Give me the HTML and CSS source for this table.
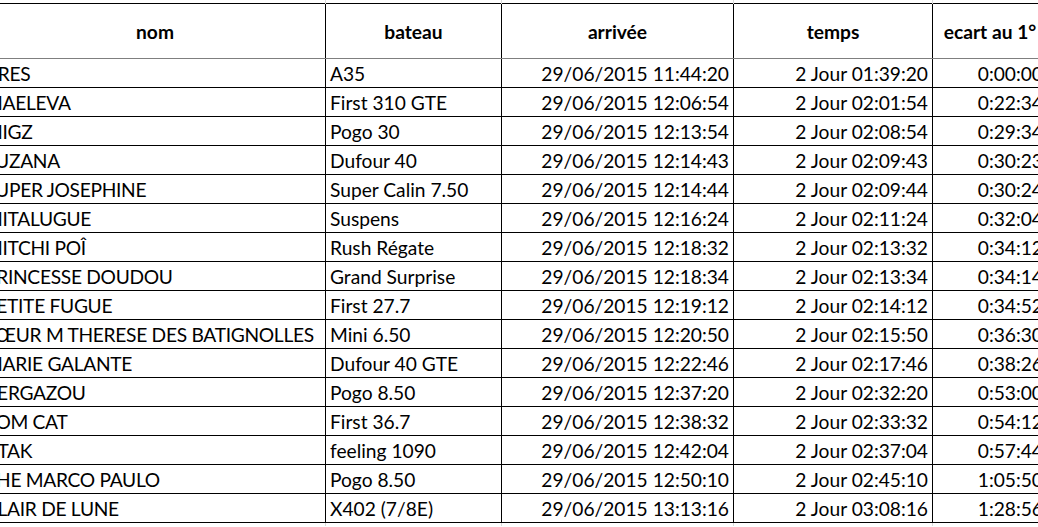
FILE: index.html
```html
<!DOCTYPE html>
<html lang="fr">
<head>
<meta charset="utf-8">
<title>Classement</title>
<link rel="stylesheet" href="styles.css">
</head>
<body>
<div class="viewport">
<table class="sheet">
<colgroup>
<col class="c-nom"><col class="c-bateau"><col class="c-arr"><col class="c-temps"><col class="c-ecart">
</colgroup>
<tbody>
<tr class="grid"><td></td><td></td><td></td><td></td><td></td></tr>
<tr class="head"><th>nom</th><th>bateau</th><th>arrivée</th><th>temps</th><th>ecart au 1°</th></tr>
<tr><td class="name">ARES</td><td>A35</td><td class="num">29/06/2015 11:44:20</td><td class="num">2 Jour 01:39:20</td><td class="num">0:00:00</td></tr>
<tr><td class="name">MAELEVA</td><td>First 310 GTE</td><td class="num">29/06/2015 12:06:54</td><td class="num">2 Jour 02:01:54</td><td class="num">0:22:34</td></tr>
<tr><td class="name">MIGZ</td><td>Pogo 30</td><td class="num">29/06/2015 12:13:54</td><td class="num">2 Jour 02:08:54</td><td class="num">0:29:34</td></tr>
<tr><td class="name">SUZANA</td><td>Dufour 40</td><td class="num">29/06/2015 12:14:43</td><td class="num">2 Jour 02:09:43</td><td class="num">0:30:23</td></tr>
<tr><td class="name">SUPER JOSEPHINE</td><td>Super Calin 7.50</td><td class="num">29/06/2015 12:14:44</td><td class="num">2 Jour 02:09:44</td><td class="num">0:30:24</td></tr>
<tr><td class="name">MITALUGUE</td><td>Suspens</td><td class="num">29/06/2015 12:16:24</td><td class="num">2 Jour 02:11:24</td><td class="num">0:32:04</td></tr>
<tr><td class="name">MITCHI POÎ</td><td>Rush Régate</td><td class="num">29/06/2015 12:18:32</td><td class="num">2 Jour 02:13:32</td><td class="num">0:34:12</td></tr>
<tr><td class="name">PRINCESSE DOUDOU</td><td>Grand Surprise</td><td class="num">29/06/2015 12:18:34</td><td class="num">2 Jour 02:13:34</td><td class="num">0:34:14</td></tr>
<tr><td class="name">PETITE FUGUE</td><td>First 27.7</td><td class="num">29/06/2015 12:19:12</td><td class="num">2 Jour 02:14:12</td><td class="num">0:34:52</td></tr>
<tr><td class="name">SŒUR M THERESE DES BATIGNOLLES</td><td>Mini 6.50</td><td class="num">29/06/2015 12:20:50</td><td class="num">2 Jour 02:15:50</td><td class="num">0:36:30</td></tr>
<tr><td class="name">MARIE GALANTE</td><td>Dufour 40 GTE</td><td class="num">29/06/2015 12:22:46</td><td class="num">2 Jour 02:17:46</td><td class="num">0:38:26</td></tr>
<tr><td class="name">BERGAZOU</td><td>Pogo 8.50</td><td class="num">29/06/2015 12:37:20</td><td class="num">2 Jour 02:32:20</td><td class="num">0:53:00</td></tr>
<tr><td class="name">TOM CAT</td><td>First 36.7</td><td class="num">29/06/2015 12:38:32</td><td class="num">2 Jour 02:33:32</td><td class="num">0:54:12</td></tr>
<tr><td class="name">KTAK</td><td>feeling 1090</td><td class="num">29/06/2015 12:42:04</td><td class="num">2 Jour 02:37:04</td><td class="num">0:57:44</td></tr>
<tr><td class="name">THE MARCO PAULO</td><td>Pogo 8.50</td><td class="num">29/06/2015 12:50:10</td><td class="num">2 Jour 02:45:10</td><td class="num">1:05:50</td></tr>
<tr><td class="name">CLAIR DE LUNE</td><td>X402 (7/8E)</td><td class="num">29/06/2015 13:13:16</td><td class="num">2 Jour 03:08:16</td><td class="num">1:28:56</td></tr>
<tr class="grid"><td></td><td></td><td></td><td></td><td></td></tr>
</tbody>
</table>
</div>
</body>
</html>
```

FILE: styles.css
```css
html, body {
  margin: 0;
  padding: 0;
  background: #ffffff;
}

.viewport {
  width: 1038px;
  height: 527px;
  overflow: hidden;
}

.sheet {
  margin-left: -16px;
  border-collapse: collapse;
  table-layout: fixed;
  width: 1063px;
  font-family: "Lato", "Open Sans", sans-serif;
  font-size: 19.2px;
  color: #000;
}

.c-nom { width: 341px; }
.c-bateau { width: 176px; }
.c-arr { width: 232px; }
.c-temps { width: 199px; }
.c-ecart { width: 115px; }

.sheet th,
.sheet td {
  border: 1px solid #000;
  padding: 0 4px;
  white-space: nowrap;
  overflow: hidden;
  line-height: 22px;
}

.sheet tr {
  height: 29px;
}

.sheet td {
  vertical-align: bottom;
  padding-bottom: 2px;
  text-align: left;
}

.sheet td.name {
  padding-left: 0;
  letter-spacing: -0.3px;
}

.sheet td.num {
  text-align: right;
}

.sheet .head {
  height: 55px;
}

.sheet .head th {
  font-weight: 700;
  text-align: center;
  vertical-align: middle;
  border-bottom-color: #7f7f7f;
  padding-top: 2px;
}

.sheet .grid {
  height: 3px;
}

.sheet .grid td {
  border-top: none;
  border-bottom: none;
  border-left-color: #dadada;
  border-right-color: #dadada;
  padding: 0;
  line-height: 0;
  height: 3px;
}
```
